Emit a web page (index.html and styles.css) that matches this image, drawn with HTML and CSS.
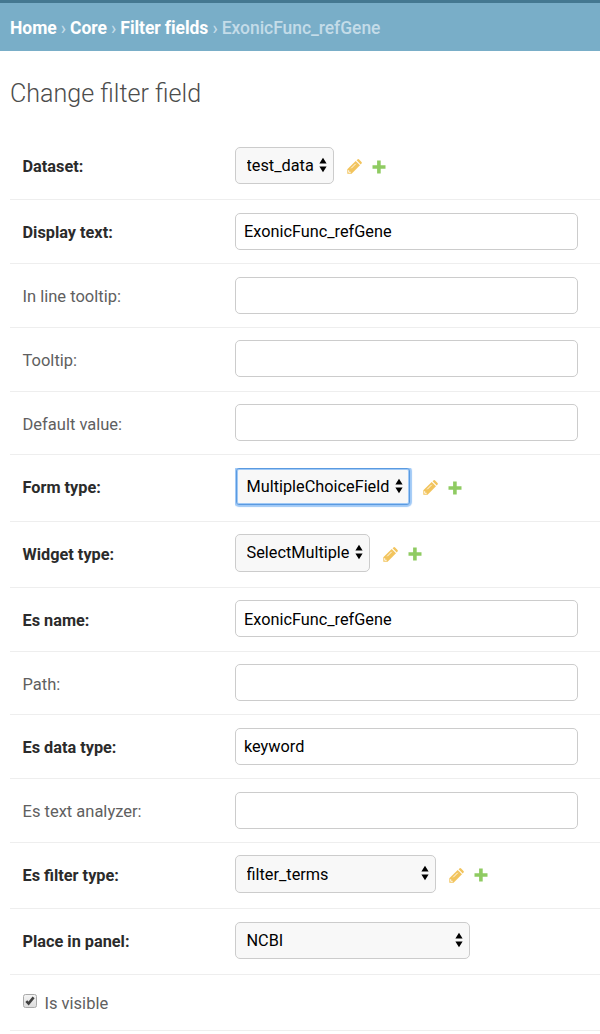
FILE: index.html
```html
<!DOCTYPE html>
<html lang="en">
<head>
<meta charset="utf-8">
<title>Change filter field</title>
<link rel="stylesheet" href="styles.css">
</head>
<body>
<svg class="defs" width="0" height="0">
  <symbol id="pencil" viewBox="0 0 15 15"><path d="M.3 14.700v-4.400L8.700 2l4.300 4.300-8.400 8.400z" fill="#f2c45d"/><path d="M9.600 1.300l.8-.8q.8-.8 1.700 0l2.400 2.400q.8.900 0 1.700l-.8.800z" fill="#f2c45d"/><path d="M4.200 9.300l4.500-4.500M1.700 11.200v2.100h2" fill="none" stroke="#fff" stroke-width=".9"/></symbol>
  <symbol id="plus" viewBox="0 0 14 14"><path d="M5.100.5h3.600v4.700h4.800v3.600H8.700v4.700H5.100V8.800H.5V5.200h4.600z" fill="#8fcb62"/></symbol>
  <symbol id="arrows" viewBox="0 0 8 16"><path d="M4 .7L7.600 6.500H.4zM4 15.300L.4 9.500h7.200z" fill="#000"/></symbol>
</svg>
<nav class="breadcrumbs"><a>Home</a> › <a>Core</a> › <a>Filter fields</a> › ExonicFunc_refGene</nav>
<main>
<h1>Change filter field</h1>
<form>
  <div class="row r66"><label class="req">Dataset:</label><div class="select w-data"><select><option>test_data</option></select><svg class="arrows"><use href="#arrows"/></svg></div><svg class="pencil"><use href="#pencil"/></svg><svg class="plus"><use href="#plus"/></svg></div>
  <div class="row r64"><label class="req">Display text:</label><input type="text" value="ExonicFunc_refGene"></div>
  <div class="row r64"><label>In line tooltip:</label><input type="text"></div>
  <div class="row r64 up"><label>Tooltip:</label><input type="text"></div>
  <div class="row r63 up"><label>Default value:</label><input type="text"></div>
  <div class="row r67"><label class="req">Form type:</label><div class="select focused w-form"><select><option>MultipleChoiceField</option></select><svg class="arrows"><use href="#arrows"/></svg></div><svg class="pencil"><use href="#pencil"/></svg><svg class="plus"><use href="#plus"/></svg></div>
  <div class="row r66 up"><label class="req">Widget type:</label><div class="select tall w-widget"><select><option>SelectMultiple</option></select><svg class="arrows"><use href="#arrows"/></svg></div><svg class="pencil"><use href="#pencil"/></svg><svg class="plus"><use href="#plus"/></svg></div>
  <div class="row r64 up"><label class="req">Es name:</label><input class="low" type="text" value="ExonicFunc_refGene"></div>
  <div class="row r63 up"><label>Path:</label><input type="text"></div>
  <div class="row r64"><label class="req">Es data type:</label><input type="text" value="keyword"></div>
  <div class="row r64"><label>Es text analyzer:</label><input type="text"></div>
  <div class="row r66 up"><label class="req">Es filter type:</label><div class="select tall w-filter"><select class="low"><option>filter_terms</option></select><svg class="arrows"><use href="#arrows"/></svg></div><svg class="pencil"><use href="#pencil"/></svg><svg class="plus"><use href="#plus"/></svg></div>
  <div class="row r66"><label class="req">Place in panel:</label><div class="select w-panel"><select><option>NCBI</option></select><svg class="arrows"><use href="#arrows"/></svg></div></div>
  <div class="row check-row"><svg class="check" viewBox="0 0 14 14"><defs><linearGradient id="face" x2="0" y2="1"><stop stop-color="#f5f5f5"/><stop offset="1" stop-color="#dcdcdc"/></linearGradient></defs><rect x=".5" y=".5" width="13" height="13" rx="2" fill="url(#face)" stroke="#a9a9a9"/><path d="M3.300 7.200l2.300 2.400 5-6.200" fill="none" stroke="#404040" stroke-width="2.600"/></svg><span>Is visible</span></div>
</form>
</main>
</body>
</html>
```
FILE: styles.css
```css
* { box-sizing: border-box; }
body { margin: 0; background: #fff; color: #606060; font: 16.5px/20px Roboto, sans-serif; overflow: hidden; }
.defs { display: block; height: 0; }
.breadcrumbs { height: 51px; border-top: 3px solid #447891; background: #79aec8; color: #c4dce8; padding: 15px 10px 0; font-size: 17.500px; font-weight: 500; word-spacing: -.2px; white-space: nowrap; letter-spacing: -.05px; }
.breadcrumbs a { color: #fff; font-weight: 700; }
main { padding-left: 10px; }
h1 { margin: 0; height: 83px; padding-top: 27px; font-size: 25.100px; line-height: 32px; font-weight: 300; color: #4c4c4c; }
.row { display: flex; align-items: flex-start; padding: 13px 0 0 12.500px; border-bottom: 1px solid #eee; }
.up { padding-top: 12px; }
.r63 { height: 63px; }
.r64 { height: 64px; }
.r66 { height: 66px; }
.r67 { height: 67px; }
label { width: 212.500px; flex: none; padding-top: 10px; }
.up label { padding-top: 11px; }
.req { font-weight: 700; font-size: 16.300px; color: #2b2b2b; }
input, select { font: 16.300px Roboto, sans-serif; color: #000; border: 1px solid #ccc; border-radius: 5px; outline: none; margin: 0; }
input { width: 343px; height: 37px; padding: 0 8px 1px; background: #fff; }
.select { position: relative; height: 37px; flex: none; }
.tall { height: 38px; }
select { display: block; appearance: none; width: 100%; height: 100%; padding: 0 10px 1px 10.500px; background: #f8f8f8; }
input.low, select.low { padding-top: 1px; padding-bottom: 0; }
.focused { padding-left: 1px; clip-path: inset(0 -3px -3px 0); }
.focused select { padding: 0 0 1px 9.500px; border-color: #5a9ae0; border-radius: 3px; box-shadow: 0 0 1px 2px #a0c9f6, inset 0 0 0 1px #a0c9f6; }
.arrows { position: absolute; right: 7px; top: 10px; width: 8px; height: 16px; }
.w-data { width: 99px; }
.w-form { width: 175px; }
.w-widget { width: 135px; }
.w-filter { width: 201px; }
.w-panel { width: 235px; }
.pencil { width: 15px; height: 15px; margin: 12px 0 0 13px; }
.up .pencil { margin-top: 13px; }
.plus { width: 14px; height: 14px; margin: 13px 0 0 10px; }
.check-row { height: 56px; padding-top: 18px; }
.check { width: 14px; height: 14px; margin: 1px 8px 0 0; }
.check-row span { padding-top: 1px; }
```
